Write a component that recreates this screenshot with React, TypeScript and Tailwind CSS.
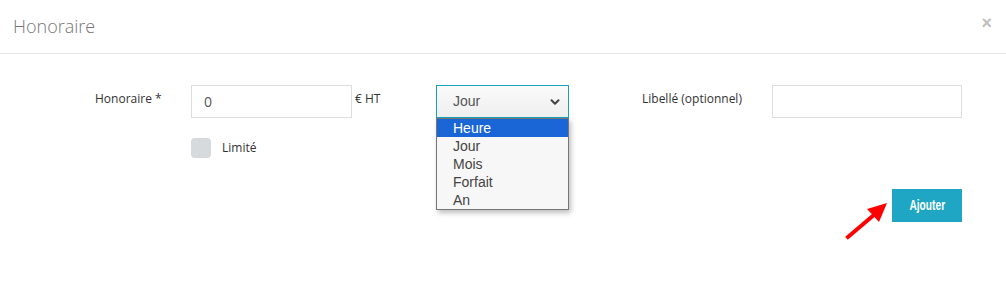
import { ChevronDown } from 'lucide-react';

const sans = { fontFamily: '"Open Sans", "Noto Sans", sans-serif' };
const arial = { fontFamily: '"Liberation Sans", Arial, sans-serif' };

// options de la liste déroulante
const units = ['Heure', 'Jour', 'Mois', 'Forfait', 'An'];

function Arrow() {
  return (
    <svg className="absolute left-[843px] top-[198px]" width="50" height="45" viewBox="0 0 50 45">
      <line x1="5" y1="39" x2="32" y2="16" stroke="#ff0000" strokeWidth="4" strokeLinecap="square" />
      <polygon points="44,5 24,11 36,24" fill="#ff0000" />
    </svg>
  );
}

export default function App() {
  return (
    <div className="relative w-[1006px] h-[285px] bg-white overflow-hidden" style={sans}>
      {/* en-tête */}
      <div className="h-[54px] border-b border-[#e5e5e5] flex items-center justify-between pl-[13px] pr-[14px]">
        <h4 className="text-[18px] font-light text-[#777] leading-none -mt-[2px]">Honoraire</h4>
        <span className="text-[18px] font-bold text-[#c0c0c0] leading-none -mt-[8px]" style={arial}>×</span>
      </div>

      {/* formulaire */}
      <div className="pt-[31px]">
        <div className="flex items-start">
          <label className="ml-[95px] w-[96px] pt-[5px] text-[12px] leading-[18px] text-[#333]">Honoraire *</label>
          <div className="w-[161px] h-[33px] border border-[#ddd] flex items-center pl-[12px] text-[14px] text-[#555]">0</div>
          <span className="w-[84px] pl-[3px] pt-[5px] text-[12px] leading-[18px] text-[#333]">€ HT</span>

          <div className="relative w-[133px]">
            <div
              className="h-[33px] border border-[#17a2b8] bg-gradient-to-b from-[#fafafa] to-[#efefef] flex items-center justify-between pl-[16px] pr-[6px] text-[14px] text-[#555]"
              style={arial}
            >
              <span>Jour</span>
              <ChevronDown size={14} strokeWidth={3.5} className="text-[#444]" />
            </div>
            <ul
              className="absolute left-0 top-[33px] w-[133px] border border-[#767676] bg-[#f7f7f7] shadow-[2px_3px_5px_rgba(0,0,0,0.25)] z-10"
              style={arial}
            >
              {units.map((u, i) => (
                <li
                  key={u}
                  className={`h-[18px] leading-[18px] pl-[16px] text-[14px] ${
                    i === 0 ? 'bg-[#1a66d6] text-white' : 'text-[#444]'
                  }`}
                >
                  {u}
                </li>
              ))}
            </ul>
          </div>

          <label className="ml-[73px] w-[130px] pt-[5px] text-[12px] leading-[18px] text-[#333]">Libellé (optionnel)</label>
          <div className="w-[190px] h-[33px] border border-[#ddd]" />
        </div>

        <div className="flex items-center mt-[20px] ml-[191px]">
          <span className="w-[20px] h-[20px] rounded-[4px] bg-[#d6dadd]" />
          <span className="ml-[11px] text-[12px] text-[#333]">Limité</span>
        </div>

        <div className="flex justify-end pr-[44px] mt-[31px]">
          <button className="w-[70px] h-[33px] bg-[#1ea6c4] text-white flex items-center justify-center">
            <span className="inline-block text-[15px] font-bold scale-x-[0.68]" style={arial}>
              Ajouter
            </span>
          </button>
        </div>
      </div>

      <Arrow />
    </div>
  );
}
